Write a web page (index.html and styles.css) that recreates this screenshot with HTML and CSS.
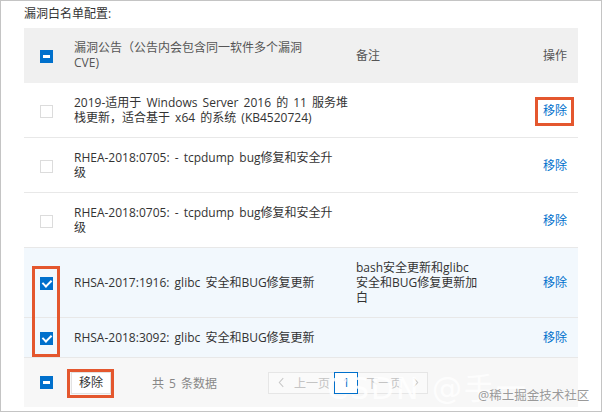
FILE: index.html
```html
<!DOCTYPE html>
<html lang="zh-CN">
<head>
<meta charset="utf-8">
<title>漏洞白名单配置</title>
<link rel="stylesheet" href="styles.css">
</head>
<body>
<div class="frame">
  <div class="title">漏洞白名单配置:</div>
  <table class="grid">
    <colgroup>
      <col class="c-check"><col class="c-name"><col class="c-note"><col class="c-op">
    </colgroup>
    <thead>
      <tr>
        <th class="cell-check"><span class="cb cb-part"></span></th>
        <th>漏洞公告（公告内会包含同一软件多个漏洞<br>CVE)</th>
        <th>备注</th>
        <th class="cell-op">操作</th>
      </tr>
    </thead>
    <tbody>
      <tr>
        <td class="cell-check"><span class="cb"></span></td>
        <td>2019-适用于 Windows Server 2016 的 11 服务堆<br>栈更新，适合基于 x64 的系统 (KB4520724)</td>
        <td></td>
        <td class="cell-op"><a class="link">移除</a></td>
      </tr>
      <tr>
        <td class="cell-check"><span class="cb"></span></td>
        <td>RHEA-2018:0705: - tcpdump bug修复和安全升<br>级</td>
        <td></td>
        <td class="cell-op"><a class="link">移除</a></td>
      </tr>
      <tr>
        <td class="cell-check"><span class="cb"></span></td>
        <td>RHEA-2018:0705: - tcpdump bug修复和安全升<br>级</td>
        <td></td>
        <td class="cell-op"><a class="link">移除</a></td>
      </tr>
      <tr class="selected">
        <td class="cell-check"><span class="cb cb-on"></span></td>
        <td>RHSA-2017:1916: glibc 安全和BUG修复更新</td>
        <td>bash安全更新和glibc<br>安全和BUG修复更新加<br>白</td>
        <td class="cell-op"><a class="link">移除</a></td>
      </tr>
      <tr class="selected">
        <td class="cell-check"><span class="cb cb-on"></span></td>
        <td>RHSA-2018:3092: glibc 安全和BUG修复更新</td>
        <td></td>
        <td class="cell-op"><a class="link">移除</a></td>
      </tr>
    </tbody>
  </table>
  <div class="footer">
    <span class="cb cb-part"></span>
    <button class="btn">移除</button>
    <span class="total">共 5 条数据</span>
    <div class="pager">
      <span class="pg pg-prev"><svg class="chev" viewBox="0 0 8 12" width="7" height="11"><path d="M6 1 L1.5 6 L6 11" fill="none" stroke="#c8c8c8" stroke-width="1.2"/></svg>上一页</span>
      <span class="pg pg-cur">1</span>
      <span class="pg pg-next">下一页<svg class="chev" viewBox="0 0 8 12" width="7" height="11"><path d="M2 1 L6.5 6 L2 11" fill="none" stroke="#c8c8c8" stroke-width="1.2"/></svg></span>
    </div>
  </div>

  <div class="mark mark-op"></div>
  <div class="mark mark-checks"></div>
  <div class="mark mark-btn"></div>
  <div class="wm-csdn">CSDN @手一</div>
  <div class="wm-juejin">@稀土掘金技术社区</div>
</div>
</body>
</html>
```

FILE: styles.css
```css
* { box-sizing: border-box; }
html, body { margin: 0; padding: 0; background: #fff; }
body {
  font-family: "Open Sans", "Noto Sans CJK SC", sans-serif;
  font-size: 12px;
  word-spacing: 2px;
  color: #333;
}
.frame {
  position: relative;
  width: 602px;
  height: 412px;
  border: 1px solid #c4c4c4;
  padding: 5px 0 0 23px;
  overflow: hidden;
}
.title {
  line-height: 16px;
  height: 16px;
  margin-bottom: 6px;
  color: #333;
}
.grid {
  width: 554px;
  border-collapse: collapse;
  table-layout: fixed;
}
.c-check { width: 50px; }
.c-name { width: 282px; }
.c-note { width: 164px; }
.c-op { width: 58px; }
.grid th, .grid td {
  padding: 12px 0;
  line-height: 15px;
  text-align: left;
  vertical-align: middle;
  border-bottom: 1px solid #e8e8e8;
  font-weight: normal;
}
.grid thead th {
  background: #f0f0f0;
  color: #555;
  border-bottom: 1px solid #f0f0f0;
}
.grid .cell-check { padding-left: 16px; }
.grid .cell-op { text-align: right; padding-right: 11px; }
.selected td { background: #f2f8fd; }
.link { color: #0070cc; cursor: pointer; }

.cb {
  display: inline-block;
  width: 13px;
  height: 13px;
  border: 1px solid #dcdcdc;
  background: #fff;
  vertical-align: middle;
  position: relative;
}
.cb-part, .cb-on { background: #0070cc; border-color: #0070cc; }
.cb-part::after {
  content: "";
  position: absolute;
  left: 2px; top: 4px;
  width: 7px; height: 3px;
  background: #fff;
}
.cb-on::after {
  content: "";
  position: absolute;
  left: 3px; top: 0px;
  width: 4px; height: 7px;
  border: solid #fff;
  border-width: 0 2px 2px 0;
  transform: rotate(45deg);
}

.footer {
  width: 554px;
  height: 49px;
  background: #f7f7f7;
  display: flex;
  align-items: center;
  padding-left: 16px;
}
.btn {
  margin-left: 18px;
  height: 22px;
  width: 40px;
  padding: 0;
  border: 1px solid #e2e2e2;
  background: #fff;
  font: inherit;
  color: #333;
  line-height: 20px;
}
.total { margin-left: 41px; color: #888; }
.pager {
  margin-left: 51px;
  display: flex;
  height: 22px;
  border: 1px solid #e6e6e6;
  background: #fafafa;
  color: #c4c4c4;
}
.pg { display: flex; align-items: center; }
.pg-prev { padding: 0 4px 0 9px; gap: 9px; }
.pg-next { padding: 0 8px 0 8px; gap: 10px; }
.pg-cur {
  width: 24px;
  justify-content: center;
  border: 1px solid #0070cc;
  margin: -1px 0;
  color: #0070cc;
  background: #fff;
}
.chev { display: block; }

.mark {
  position: absolute;
  border: 3px solid #e4572e;
}
.mark-op { left: 534px; top: 96px; width: 39px; height: 29px; }
.mark-checks { left: 31px; top: 265px; width: 28px; height: 91px; }
.mark-btn { left: 66px; top: 368px; width: 47px; height: 29px; }

.wm-csdn {
  position: absolute;
  left: 326px;
  top: 363px;
  font-family: "DejaVu Sans", "Noto Sans CJK SC", sans-serif;
  font-size: 30px;
  letter-spacing: 2px;
  word-spacing: 0;
  color: rgba(255, 255, 255, 0.85);
  white-space: nowrap;
}
.wm-juejin {
  position: absolute;
  left: 477px;
  top: 384px;
  font-size: 12.5px;
  color: #9a9a9a;
  text-shadow: 0 0 2px #fff;
  white-space: nowrap;
}
```
